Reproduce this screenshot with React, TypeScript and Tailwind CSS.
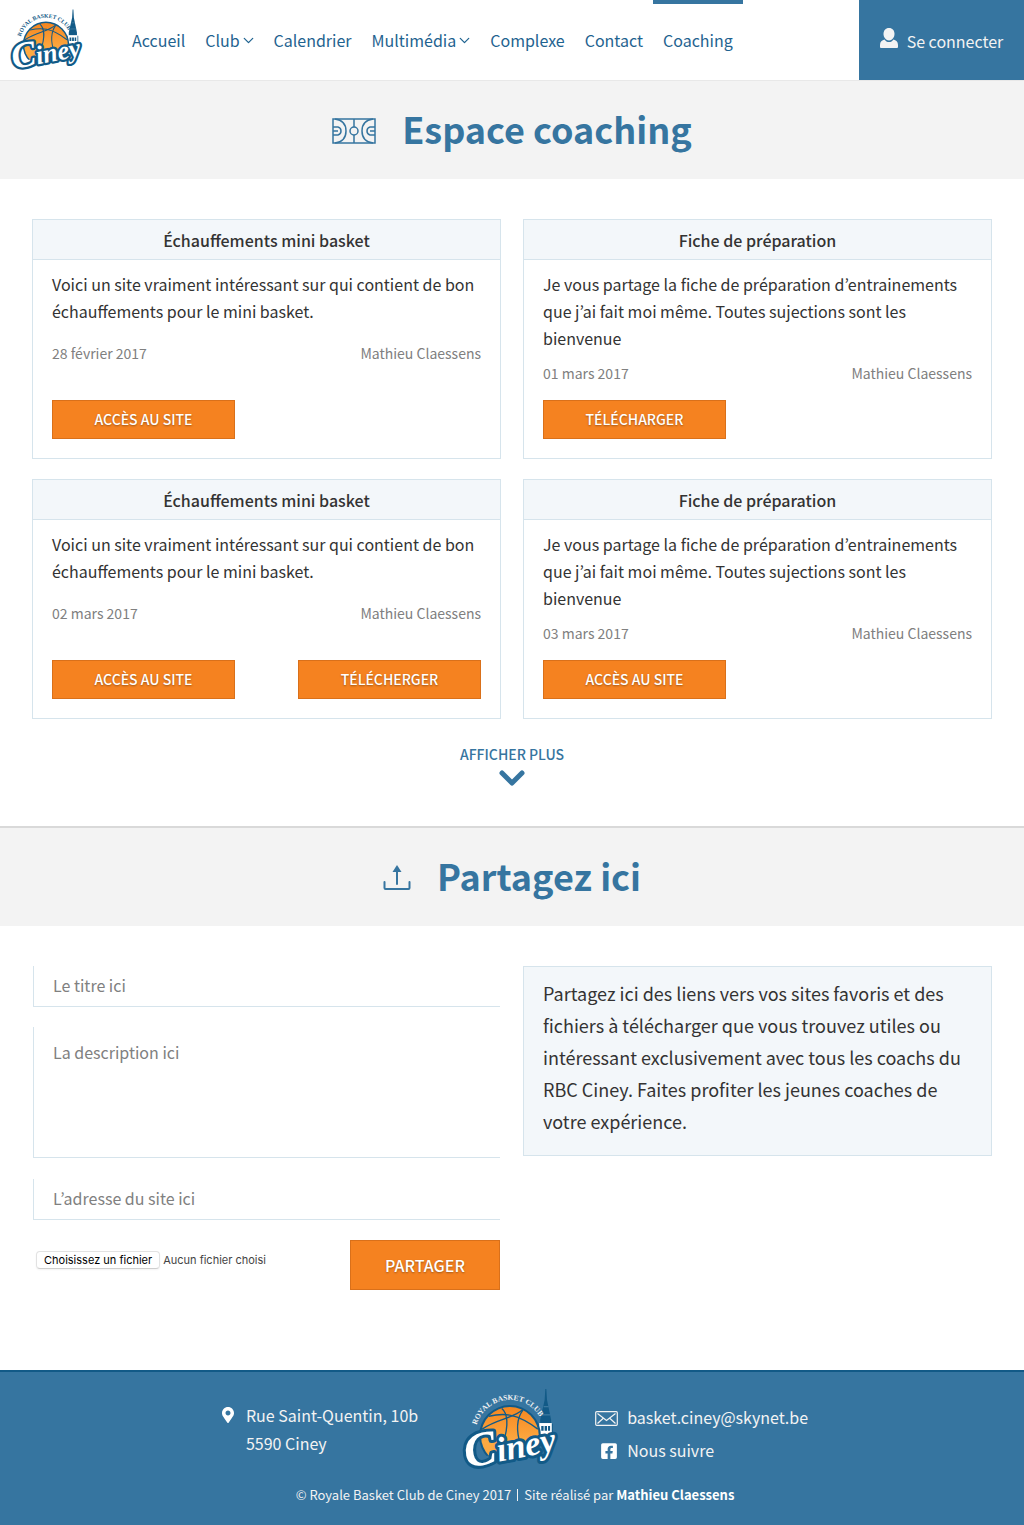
import { FaFacebookSquare, FaMapMarkerAlt } from "react-icons/fa";

type Resource = {
  title: string;
  text: string;
  date: string;
  author: string;
  actions: string[];
  metaGap: string;
};

const site = {
  title: "Échauffements mini basket",
  text: "Voici un site vraiment intéressant sur qui contient de bon échauffements pour le mini basket.",
  author: "Mathieu Claessens",
  metaGap: "mt-4",
};

const sheet = {
  title: "Fiche de préparation",
  text: "Je vous partage la fiche de préparation d’entrainements que j’ai fait moi même. Toutes sujections sont les bienvenue",
  author: "Mathieu Claessens",
  metaGap: "mt-[9px]",
};

const resources: Resource[] = [
  { ...site, date: "28 février 2017", actions: ["ACCÈS AU SITE"] },
  { ...sheet, date: "01 mars 2017", actions: ["TÉLÉCHARGER"] },
  { ...site, date: "02 mars 2017", actions: ["ACCÈS AU SITE", "TÉLÉCHERGER"] },
  { ...sheet, date: "03 mars 2017", actions: ["ACCÈS AU SITE"] },
];

const links = [
  { label: "Accueil" },
  { label: "Club", menu: true },
  { label: "Calendrier" },
  { label: "Multimédia", menu: true },
  { label: "Complexe" },
  { label: "Contact" },
  { label: "Coaching", active: true },
];

function Logo({ id, className, ring }: { id: string; className: string; ring: string }) {
  return (
    <svg viewBox="36 70 300 242" className={"overflow-visible " + className} role="img" aria-label="Royal Basket Club Ciney">
      <defs>
        <linearGradient id={id + "-ball"} x1="0" y1="0" x2="0" y2="1">
          <stop offset="0" stopColor="#f5861f" />
          <stop offset="0.600" stopColor="#fdaa42" />
        </linearGradient>
        <path id={id + "-arc"} d="M82 178A102 102 0 0 1 274 166" />
        <clipPath id={id + "-cut"}>
          <path d="M70 100H290V236L70 276z" />
        </clipPath>
      </defs>
      <path d="M284 72h3l2 32 12 58v12h5v44h-42v-44h5v-12l13-58z" fill="#125a87" />
      <path d="M279 124h14M274 148h24" stroke="#5f93b5" strokeWidth="2" />
      <path d="M266 172h37v34h-37z" fill="#fff" />
      <path d="M272 181h7v14h-7zM282 181h7v14h-7zM292 181h6v14h-6z" fill="#125a87" />
      <g clipPath={"url(#" + id + "-cut)"}>
        <circle cx="180" cy="210" r="91" fill="#125a87" />
        <circle cx="180" cy="210" r="85" fill={"url(#" + id + "-ball)"} />
        <g fill="none" stroke="#125a87" strokeWidth="4">
          <path d="M156 129C172 142 178 176 160 230" />
          <path d="M118 152C160 142 200 142 262 190" />
          <path d="M218 134C200 158 196 190 212 240" />
          <path d="M98 190C140 160 190 158 216 134" />
        </g>
      </g>
      <text fontSize="22" fontWeight="700" fontFamily="'Liberation Serif', serif" className={ring}>
        <textPath href={"#" + id + "-arc"}>ROYAL BASKET CLUB</textPath>
      </text>
      <text
        x="54"
        y="304"
        transform="rotate(-11 54 304)"
        fontFamily="'Liberation Serif', serif"
        fontWeight="700"
        fontStyle="italic"
        fontSize="102"
        fill="#fff"
        stroke="#125a87"
        strokeWidth="18"
        strokeLinejoin="round"
        paintOrder="stroke"
      >
        <tspan fontSize="142">C</tspan>iney
      </text>
    </svg>
  );
}

function Chevron({ className, width }: { className: string; width: number }) {
  return (
    <svg viewBox="0 0 26 16" className={className} fill="none" stroke="currentColor" strokeWidth={width} strokeLinecap="round" strokeLinejoin="round" aria-hidden="true">
      <path d="M3 3l10 10L23 3" />
    </svg>
  );
}

function CourtIcon() {
  return (
    <svg viewBox="0 0 44 26" className="mt-[2px] h-[26px] w-11" fill="none" stroke="#3675a0" strokeWidth="1.5" aria-hidden="true">
      <rect x="1" y="1" width="42" height="24" />
      <path d="M22 1v8M22 17v8M3 1c8 1 11 6 11 12S11 24 3 25M41 1c-8 1-11 6-11 12s3 11 11 12M1 9h5c4 1 4 7 0 8H1M43 9h-5c-4 1-4 7 0 8h5M1 13h5M38 13h5" />
      <circle cx="22" cy="13" r="4" />
    </svg>
  );
}

function ShareIcon() {
  return (
    <svg viewBox="0 0 28 26" className="mt-[2px] h-[26px] w-7" fill="none" stroke="#3675a0" strokeWidth="2" strokeLinecap="round" aria-hidden="true">
      <path d="M1.500 17v6q0 1 1 1h23q1 0 1-1v-6M14 19V6" />
      <path d="M14 0l4.500 7h-9z" fill="#3675a0" stroke="none" />
    </svg>
  );
}

function Band({ icon, title }: { icon: React.ReactNode; title: string }) {
  return (
    <div className="flex h-[98px] items-center justify-center gap-[26px] bg-[#f3f3f3]">
      {icon}
      <h1 className="pb-1 text-[36px] leading-[48px] font-bold text-[#3675a0]">{title}</h1>
    </div>
  );
}

const actionStyle =
  "border border-[#d9701a] bg-[#f58220] font-medium text-white [text-shadow:0_1px_2px_rgba(0,0,0,0.35)]";

function Card({ item }: { item: Resource }) {
  return (
    <article className="flex min-h-60 flex-col border border-[#d6e4ec]">
      <h2 className="border-b border-[#d6e4ec] bg-[#f3f7fa] pt-[3px] pb-px text-center text-base leading-[35px] font-medium text-[#333]">
        {item.title}
      </h2>
      <div className="flex flex-1 flex-col px-[19px] pt-[11px] pb-[19px]">
        <p className="text-base leading-[27px] text-[#333]">{item.text}</p>
        <div className={"flex justify-between text-sm leading-6 text-[#808080] " + item.metaGap}>
          <time>{item.date}</time>
          <span>{item.author}</span>
        </div>
        <div className="mt-auto flex justify-between">
          {item.actions.map((a) => (
            <button key={a} type="button" className={"h-[39px] w-[183px] pb-[2px] text-sm " + actionStyle}>
              {a}
            </button>
          ))}
        </div>
      </div>
    </article>
  );
}

const field =
  "block w-full border-b border-l border-[#d6e4ec] bg-transparent px-[19px] text-base text-[#333] outline-none placeholder:text-[#808080] placeholder:opacity-100";

export default function App() {
  return (
    <div className="bg-white font-['Noto_Sans_CJK_KR',sans-serif]">
      <header className="flex h-[81px] border-b border-[#e8e8e8]">
        <a href="#" className="mt-[9px] ml-[9px] shrink-0">
          <Logo id="top" className="h-[62px] w-[77px]" ring="fill-[#125a87]" />
        </a>
        <nav className="ml-[36px] flex text-base leading-6 text-[#1f6390]">
          {links.map((l) => (
            <a
              key={l.label}
              href="#"
              className={
                "flex items-center gap-[3px] border-t-4 px-[10px] pb-[5px] " +
                (l.active ? "border-[#3675a0]" : "border-transparent")
              }
            >
              {l.label}
              {l.menu && <Chevron className="mt-[2px] h-[7px] w-[11px]" width={3} />}
            </a>
          ))}
        </nav>
        <a href="#" className="ml-auto flex h-20 w-[165px] shrink-0 items-center justify-center gap-[9px] bg-[#3675a0] pt-[2px] text-base leading-6 text-[#f3f3f3]">
          <svg viewBox="0 0 18 20" className="mb-[6px] h-5 w-[18px]" fill="currentColor" aria-hidden="true">
            <path d="M9 0c3.500 0 5.500 2.600 5.500 6S12 12.500 9 12.500 3.500 9.400 3.500 6 5.500 0 9 0z" />
            <path d="M4.500 11.500c2 3.400 7 3.400 9 0 2.500.6 4.500 2.300 4.500 5.500v2q0 1-1 1H1q-1 0-1-1v-2c0-3.200 2-4.900 4.500-5.500z" />
          </svg>
          Se connecter
        </a>
      </header>

      <main>
        <section>
          <Band icon={<CourtIcon />} title="Espace coaching" />
          <div className="grid grid-cols-2 gap-x-[22px] gap-y-5 px-8 pt-10">
            {resources.map((r) => (
              <Card key={r.date} item={r} />
            ))}
          </div>
          <div className="flex justify-center pt-[23px] pb-10">
            <button type="button" className="flex flex-col items-center gap-1 text-sm leading-6 font-medium text-[#3675a0]">
              AFFICHER PLUS
              <Chevron className="h-4 w-[26px]" width={5} />
            </button>
          </div>
        </section>

        <section className="border-t-2 border-[#d9d9d9]">
          <Band icon={<ShareIcon />} title="Partagez ici" />
          <div className="grid grid-cols-2 items-start gap-x-[22px] px-8 pt-10 pb-20">
            <form className="px-px" onSubmit={(e) => e.preventDefault()}>
              <input aria-label="Titre" placeholder="Le titre ici" className={field + " h-[41px] pb-[2px]"} />
              <textarea aria-label="Description" placeholder="La description ici" className={field + " mt-5 h-[131px] resize-none pt-[13px] leading-6"} />
              <input aria-label="Adresse du site" placeholder="L’adresse du site ici" className={field + " mt-[21px] h-[41px] pb-[2px]"} />
              <div className="mt-5 flex items-start justify-between">
                <div className="mt-[11px] ml-[3px] flex items-center gap-[3px] font-[Inter,sans-serif] text-[11px] leading-4 text-[#444]">
                  <input id="fichier" type="file" className="peer sr-only" />
                  <label htmlFor="fichier" className="rounded-sm border border-[#e2e2e2] border-b-[#cfcfcf] px-[7px] text-black shadow-xs">
                    Choisissez un fichier
                  </label>
                  <span>Aucun fichier choisi</span>
                </div>
                <button type="submit" className={"h-[50px] w-[150px] text-base " + actionStyle}>
                  PARTAGER
                </button>
              </div>
            </form>
            <p className="border border-[#d6e4ec] bg-[#f3f7fa] px-[19px] pt-[10px] pb-[18px] text-lg leading-8 text-[#333]">
              Partagez ici des liens vers vos sites favoris et des fichiers à télécharger que vous trouvez utiles ou
              intéressant exclusivement avec tous les coachs du RBC Ciney. Faites profiter les jeunes coaches de votre
              expérience.
            </p>
          </div>
        </section>
      </main>

      <footer className="border-t-2 border-[#125a87] bg-[#3675a0] pb-[19px] pl-[6px] text-[#f3f3f3]">
        <div className="flex items-start justify-center pt-4">
          <address className="mt-[13px] flex gap-3 text-base leading-7 not-italic">
            <FaMapMarkerAlt className="mt-[6px] h-4 w-3 text-white" aria-hidden="true" />
            <span>
              Rue Saint-Quentin, 10b
              <br />
              5590 Ciney
            </span>
          </address>
          <Logo id="bottom" className="ml-[43px] h-[83px] w-[102px]" ring="fill-[#f3f3f3]" />
          <ul className="mt-[13px] ml-8 text-base leading-[33px]">
            <li>
              <a href="mailto:basket.ciney@skynet.be" className="flex items-center gap-[9px]">
                <svg viewBox="0 0 23 15" className="mt-[2px] h-[15px] w-[23px]" fill="none" stroke="currentColor" strokeWidth="1.200" aria-hidden="true">
                  <rect x="0.700" y="0.700" width="21.600" height="13.600" rx="1" />
                  <path d="M2.500 2.500l9 7 9-7M2.500 12.500l5.500-5M20.500 12.500l-5.500-5" />
                </svg>
                basket.ciney@skynet.be
              </a>
            </li>
            <li>
              <a href="#" className="flex items-center gap-[9px] pl-[5px]">
                <FaFacebookSquare className="h-[18px] w-[18px] text-white" aria-hidden="true" />
                Nous suivre
              </a>
            </li>
          </ul>
        </div>
        <p className="mt-3 flex items-center justify-center gap-[6px] text-[13px] leading-6">
          <span>© Royale Basket Club de Ciney 2017</span>
          <span className="h-3 border-l border-[#f3f3f3]" />
          <span>
            Site réalisé par <a href="#" className="font-bold text-white">Mathieu Claessens</a>
          </span>
        </p>
      </footer>
    </div>
  );
}
